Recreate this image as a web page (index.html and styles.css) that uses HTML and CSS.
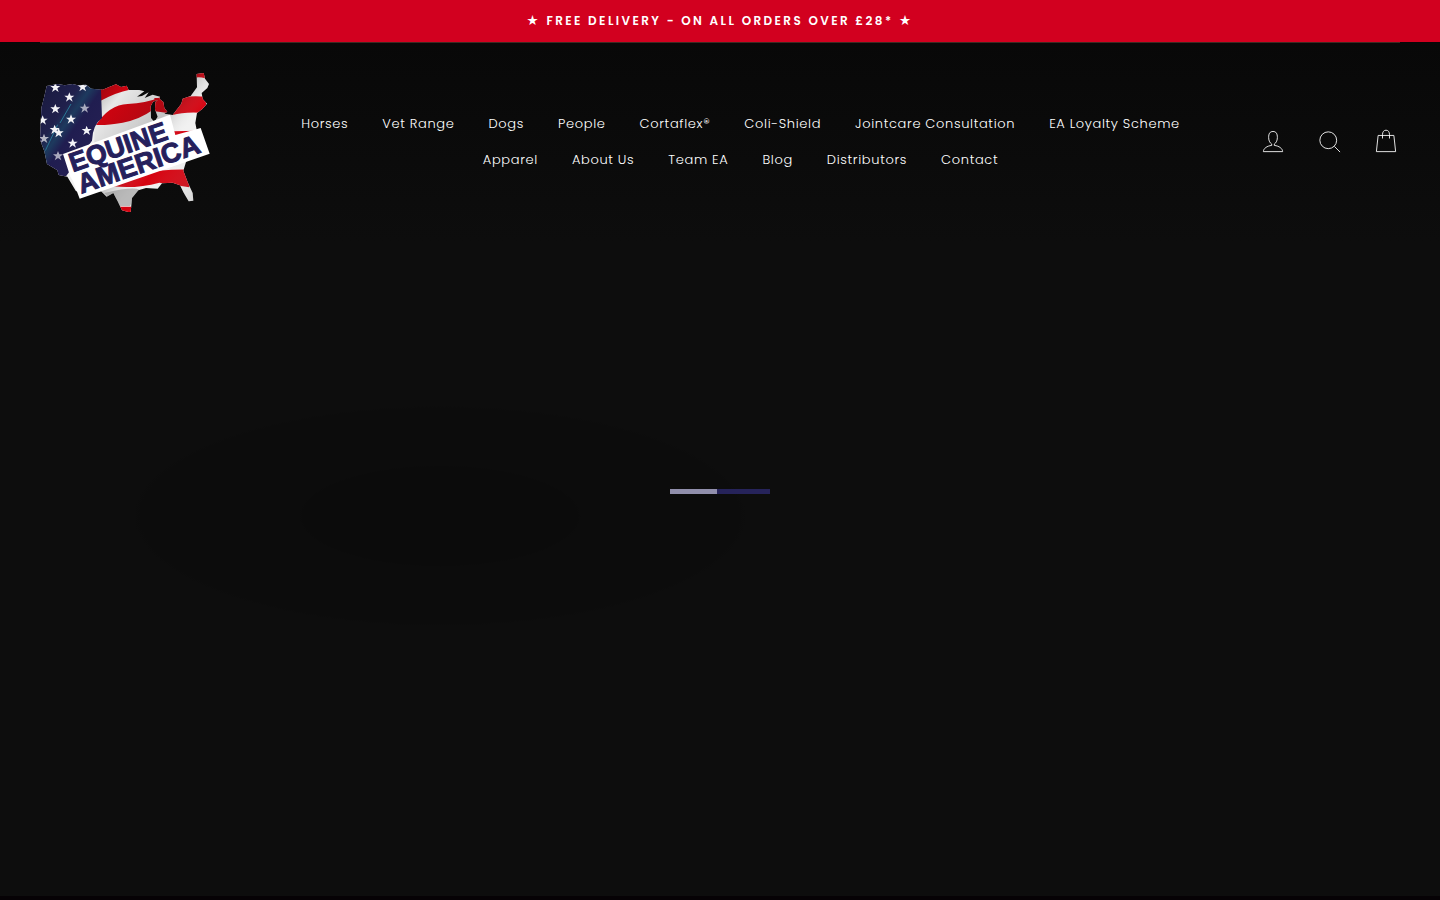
FILE: index.html
```html
<!DOCTYPE html>
<html lang="en">
<head>
<meta charset="utf-8">
<title>Equine America</title>
<link rel="stylesheet" href="styles.css">
</head>
<body>
<div class="announcement">★ FREE DELIVERY - ON ALL ORDERS OVER £28* ★</div>
<header class="header">
  <a class="logo" href="#" aria-label="Equine America">
    <svg viewBox="12 12 510 420" aria-hidden="true">
      <defs>
        <clipPath id="country"><path d="M32 54L66 48 86 52 110 48 125 52 150 50 166 62 200 65 225 55 240 49 255 57 272 53 278 66 310 66 325 70 303 86 318 84 338 73 326 90 350 80 372 86 371 94 351 101 344 115 345 150 355 162 365 146 357 124 358 102 370 92 382 102 385 120 394 131 385 137 410 141 436 107 440 92 464 84 483 58 482 18 503 15 507 32 519 48 514 60 497 75 500 93 513 107 499 123 483 135 478 165 482 185 490 230 450 282 442 308 456 345 470 375 472 398 458 400 443 374 432 352 410 344 378 346 365 362 330 360 307 367 288 390 284 434 258 427 245 400 232 375 212 386 195 370 120 370 94 326 68 321 64 307 33 288 25 250 12 215 16 120 25 85Z"/></clipPath>
        <linearGradient id="shade" x1="0" y1="0" x2="1" y2="1">
          <stop offset="0" stop-color="#111" stop-opacity=".45"/>
          <stop offset=".2" stop-color="#111" stop-opacity=".04"/>
          <stop offset=".45" stop-color="#222" stop-opacity=".22"/>
          <stop offset=".6" stop-color="#fff" stop-opacity="0"/>
          <stop offset="1" stop-color="#111" stop-opacity=".3"/>
        </linearGradient>
        <linearGradient id="canton" x1="0" y1="0" x2="1" y2="1">
          <stop offset="0" stop-color="#17183c"/>
          <stop offset=".35" stop-color="#20204c"/>
          <stop offset=".45" stop-color="#1d3a5e"/>
          <stop offset=".54" stop-color="#201d50"/>
          <stop offset="1" stop-color="#292356"/>
        </linearGradient>
        <path id="star" d="M0-15L4-5 15-5 6 2 10 13 0 6-10 13-6 2-15-5-4-5Z"/>
      </defs>
      <g clip-path="url(#country)">
        <path fill="#f1f1f1" d="M0 0H534V444H0Z"/>
        <path fill="#d50310" d="M190 50Q245 42 278 53V66Q245 72 194 98ZM180 171Q220 110 275 108T373 88L350 126Q310 155 260 164T180 171ZM355 90H395V135L357 130ZM410 141L438 88Q470 82 510 86V135Q445 130 410 141ZM410 190L490 188V210H410ZM230 355Q320 300 460 305V358L370 344Q300 363 230 355ZM240 416H294V440H240ZM475 10H508V31Q490 25 475 29Z"/>
        <path fill="url(#shade)" d="M175 0H534V444H175Z"/>
        <path fill="#777" opacity=".45" d="M205 375Q290 355 310 365L282 414H240Z"/>
        <path fill="url(#canton)" d="M0 40H194L198 150Q170 170 168 218L90 325H64L0 310Z"/>
        <path fill="none" stroke="#297795" stroke-width="3" d="M105 108L72 165M65 170L28 248"/>
        <g fill="#f3f3f7">
          <use href="#star" x="58" y="59"/><use href="#star" x="140" y="57"/>
          <use href="#star" x="100" y="88"/><use href="#star" x="58" y="123"/>
          <use href="#star" x="146" y="121" opacity=".65"/><use href="#star" x="105" y="154"/>
          <use href="#star" x="20" y="157"/><use href="#star" x="56" y="185"/><use href="#star" x="68" y="195"/>
          <use href="#star" x="152" y="188"/><use href="#star" x="24" y="212" opacity=".7"/>
          <use href="#star" x="110" y="226"/><use href="#star" x="66" y="264" opacity=".65"/>
        </g>
      </g>
      <path fill="#fff" d="M81 258L402 140 418 201 494 180 521 257 131 392 111 339 103 326Z"/>
      <g class="logo-text">
        <text class="logo-top" transform="translate(110 313) rotate(-19)">EQUINE</text>
        <text class="logo-bottom" transform="translate(136 377) rotate(-19)">AMERICA</text>
      </g>
    </svg>
  </a>
  <nav class="nav" aria-label="Main">
    <a href="#">Horses</a><a href="#">Vet Range</a><a href="#">Dogs</a><a href="#">People</a><a href="#">Cortaflex®</a><a href="#">Coli-Shield</a><a href="#">Jointcare Consultation</a><a href="#">EA Loyalty Scheme</a><a href="#">Apparel</a><a href="#">About Us</a><a href="#">Team EA</a><a href="#">Blog</a><a href="#">Distributors</a><a href="#">Contact</a>
  </nav>
  <div class="tools">
    <a href="#" aria-label="Log in"><svg viewBox="0 0 64 64"><path d="M35 39.800v-3.100c3-1.700 7-7 7-14.700C42 12.500 39 8 32 8S22 12.500 22 22c0 7.700 4 13 7 14.700v3.100C18 41 10 47 10 54h44c0-7-8-13-19-14.200"/></svg></a>
    <a href="#" aria-label="Search"><svg viewBox="0 0 64 64"><path d="M47.200 28A19.200 19.200 0 1 1 28 8.800 19.200 19.200 0 0 1 47.200 28zM42 42l13 13"/></svg></a>
    <a href="#" aria-label="Cart"><svg viewBox="0 0 64 64"><path d="M14 17h36l4 37H10zM24 24v-9c0-6 3-10 8-10s8 4 8 10v9"/></svg></a>
  </div>
</header>
<main class="hero"><div class="loader" role="progressbar" aria-label="Loading"><div class="loader-fill"></div></div></main>
</body>
</html>
```

FILE: styles.css
```css
* { box-sizing: border-box; }
body {
  margin: 0;
  min-height: 100vh;
  display: flex;
  flex-direction: column;
  background: #0d0d0d;
  color: #fff;
  font-family: Poppins, Inter, sans-serif;
}
a { color: inherit; text-decoration: none; }
.announcement {
  padding: 10px 40px;
  background: #d2001f;
  font-size: 12px;
  line-height: 22px;
  font-weight: 600;
  letter-spacing: 0.2em;
  text-align: center;
}
.header {
  position: relative;
  display: grid;
  grid-template-columns: 170px 1fr 141px;
  align-items: center;
  gap: 40px;
  padding: 30px 40px;
  background: linear-gradient(#080808, #0d0d0d);
}
.header::before {
  content: "";
  position: absolute;
  top: 0;
  left: 40px;
  right: 40px;
  border-top: 1px solid #3d2a22;
}
.logo svg { display: block; width: 100%; }
.logo-text {
  fill: #25205c;
  stroke: #25205c;
  stroke-width: 3px;
  font: bold 80px "Liberation Sans", sans-serif;
}
.logo-top { font-size: 80px; }
.logo-bottom { font-size: 82px; }
.nav {
  display: flex;
  flex-wrap: wrap;
  justify-content: center;
  margin: 0 -6px 0 6px;
}
.nav a {
  padding: 0 17px;
  font-size: 13px;
  font-weight: 300;
  line-height: 36px;
  letter-spacing: 0.05em;
}
.tools { display: flex; justify-content: space-between; }
.tools svg {
  display: block;
  width: 28px;
  fill: none;
  stroke: #fff;
  stroke-width: 2px;
}
.hero {
  flex: 1;
  display: grid;
  place-items: start center;
  padding-top: 247px;
  border-bottom: 4px solid #060205;
  background: radial-gradient(ellipse 306px 110px at 440px 274px, #0b0b0b 45%, #0c0c0c 46% 98%, transparent);
}
.loader { width: 100px; height: 5px; background: #26235a; }
.loader-fill { width: 47%; height: 100%; background: #918fac; }
```
